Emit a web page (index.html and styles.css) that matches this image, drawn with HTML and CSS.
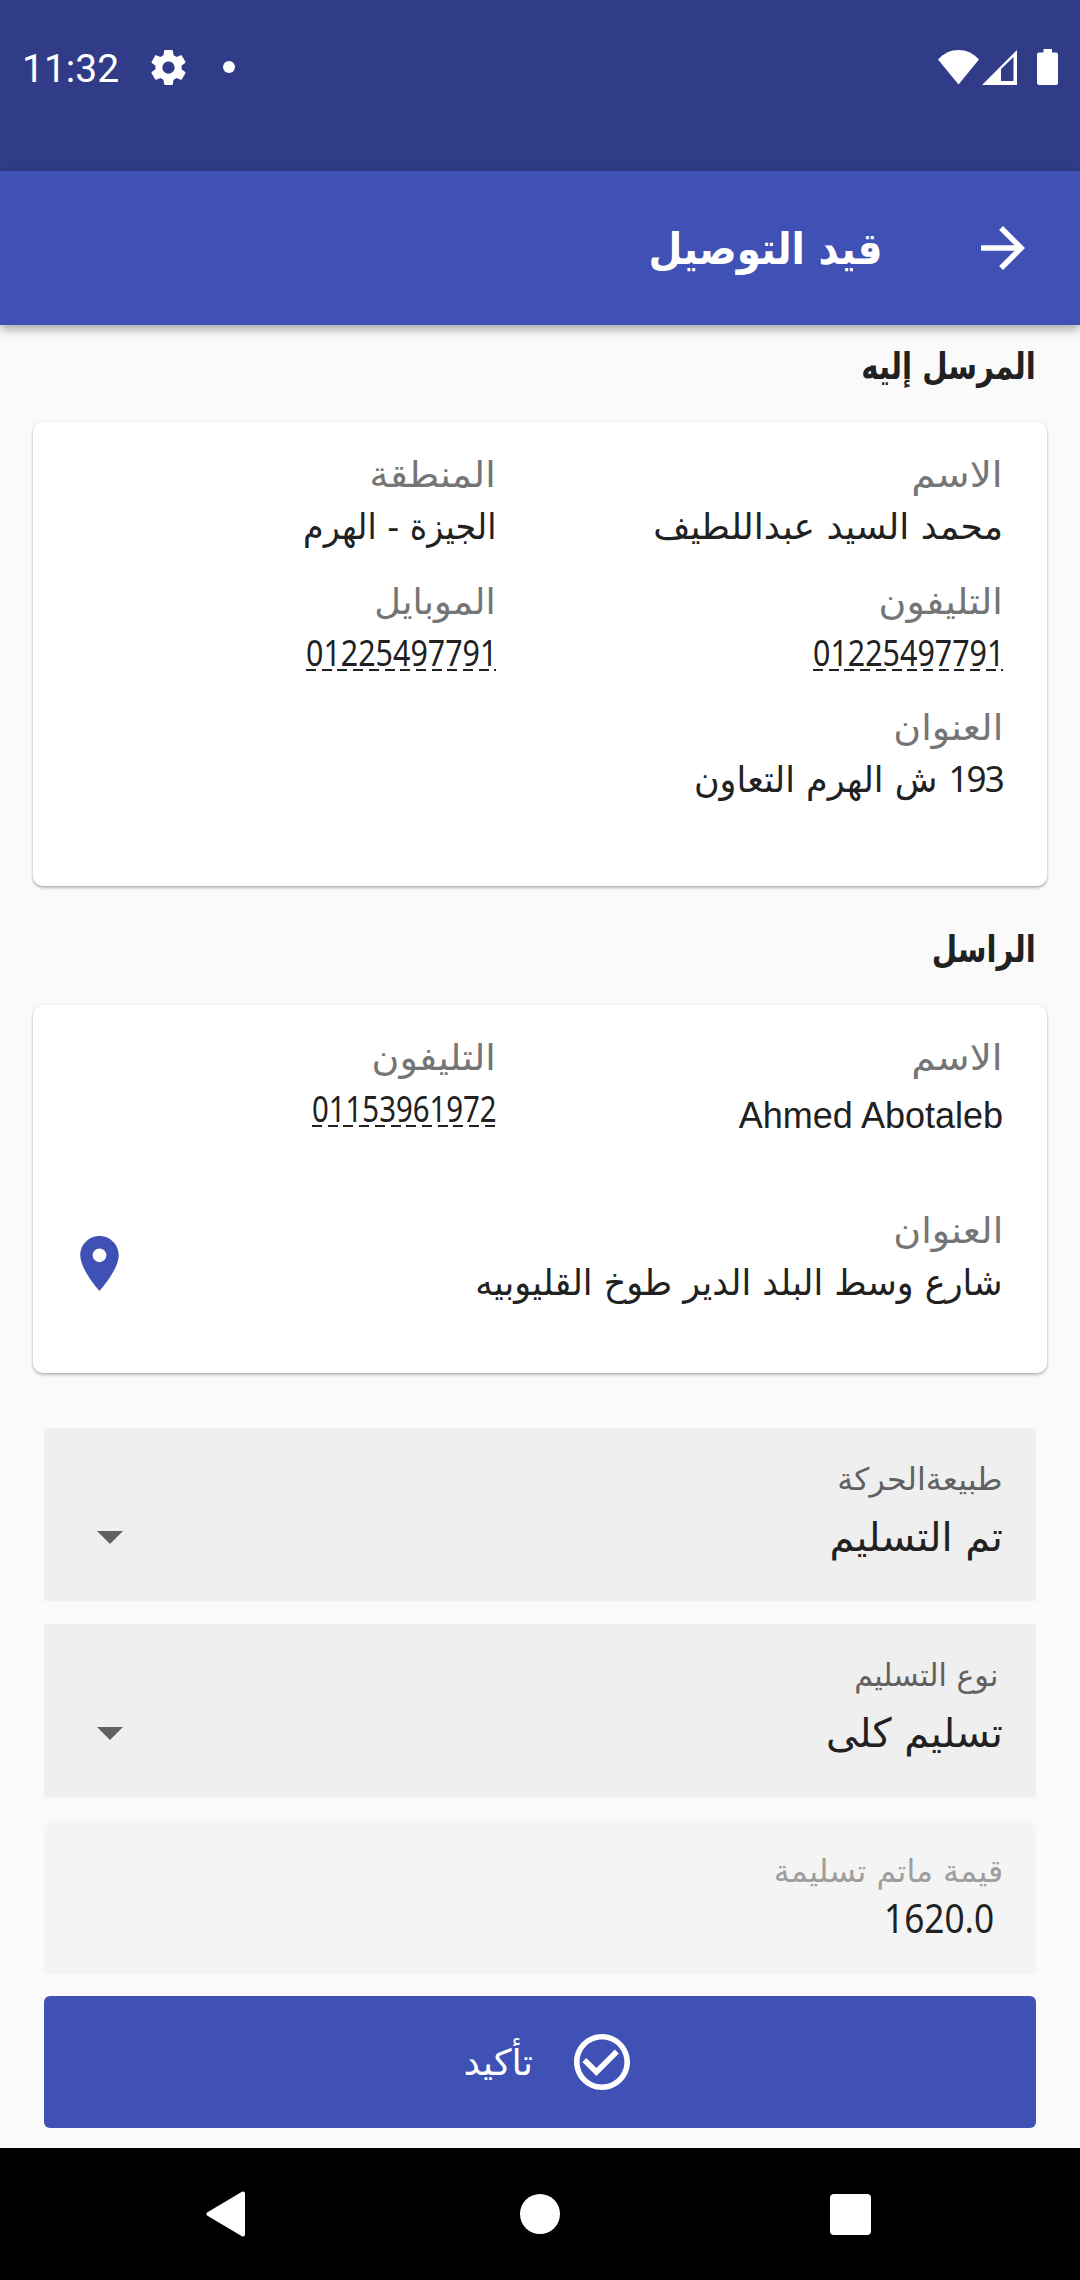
FILE: index.html
```html
<!DOCTYPE html>
<html lang="ar" dir="rtl">
<head>
    <meta charset="UTF-8">
    <meta name="viewport" content="width=device-width, initial-scale=1.0">
    <title>قيد التوصيل</title>
    <link rel="stylesheet" href="styles.css">
</head>
<body>
    <div class="status-bar" dir="ltr">
        <span class="clock">11:32</span>
        <svg class="gear" viewBox="2 2 20 20"><path fill="#fff" d="M19.43 12.98c.04-.32.07-.64.07-.98s-.03-.66-.07-.98l2.11-1.65c.19-.15.24-.42.12-.64l-2-3.46c-.12-.22-.39-.3-.61-.22l-2.49 1c-.52-.4-1.08-.73-1.69-.98l-.38-2.65C14.46 2.18 14.25 2 14 2h-4c-.25 0-.46.18-.49.42l-.38 2.65c-.61.25-1.17.59-1.69.98l-2.49-1c-.23-.09-.49 0-.61.22l-2 3.46c-.13.22-.07.49.12.64l2.11 1.65c-.04.32-.07.65-.07.98s.03.66.07.98l-2.11 1.65c-.19.15-.24.42-.12.64l2 3.46c.12.22.39.3.61.22l2.49-1c.52.4 1.08.73 1.69.98l.38 2.65c.03.24.24.42.49.42h4c.25 0 .46-.18.49-.42l.38-2.65c.61-.25 1.17-.59 1.69-.98l2.49 1c.23.09.49 0 .61-.22l2-3.46c.12-.22.07-.49-.12-.64l-2.11-1.65zM12 15.5c-1.93 0-3.5-1.57-3.5-3.5s1.57-3.5 3.5-3.5 3.5 1.57 3.5 3.5-1.57 3.5-3.5 3.5z"/></svg>
        <span class="dot"></span>
        <div class="status-icons">
            <svg width="41" height="36" viewBox="0 0 41 36"><path fill="#fff" d="M0 10.500C6 4 13 1 20.500 1S35 4 41 10.500L20.500 35.500z"/></svg>
            <svg class="signal" width="35" height="36" viewBox="0 0 35 36"><path fill="#fff" fill-rule="evenodd" d="M0 36L35 1v35zM19 20v12h12.500V8z"/></svg>
            <svg class="battery" width="21" height="36" viewBox="0 0 21 36"><path fill="#fff" d="M6.500 0h8.500v3.500h4a2 2 0 0 1 2 2V34a2 2 0 0 1-2 2H2a2 2 0 0 1-2-2V5.500a2 2 0 0 1 2-2h4.500z"/></svg>
        </div>
    </div>

    <div class="app-bar">
        <svg class="back" viewBox="4 4 16 16"><path fill="#fff" d="M12 4l-1.410 1.410L16.170 11H4v2h12.170l-5.580 5.590L12 20l8-8z"/></svg>
        <h1><span class="fit">قيد التوصيل</span></h1>
    </div>

    <div class="content">
        <h2><span class="fit">المرسل إليه</span></h2>
        <div class="card receiver">
            <div class="item">
                <p class="label"><span class="fit wider">الاسم</span></p>
                <p class="value"><span class="fit">محمد السيد عبداللطيف</span></p>
            </div>
            <div class="item">
                <p class="label"><span class="fit wide-text">المنطقة</span></p>
                <p class="value"><span class="fit narrower">الجيزة - الهرم</span></p>
            </div>
            <div class="item">
                <p class="label"><span class="fit wide-text">التليفون</span></p>
                <p class="phone"><span class="digits">01225497791</span></p>
            </div>
            <div class="item">
                <p class="label"><span class="fit slight">الموبايل</span></p>
                <p class="phone"><span class="digits">01225497791</span></p>
            </div>
            <div class="item wide">
                <p class="label"><span class="fit wide-text">العنوان</span></p>
                <p class="value"><span class="fit narrow"><span class="num">193</span> ش الهرم التعاون</span></p>
            </div>
        </div>

        <h2><span class="fit">الراسل</span></h2>
        <div class="card sender">
            <div class="item">
                <p class="label"><span class="fit wider">الاسم</span></p>
                <p class="latin">Ahmed Abotaleb</p>
            </div>
            <div class="item">
                <p class="label"><span class="fit wide-text">التليفون</span></p>
                <p class="phone short"><span class="digits">01153961972</span></p>
            </div>
            <div class="item wide address">
                <div>
                    <p class="label"><span class="fit wide-text">العنوان</span></p>
                    <p class="value"><span class="fit narrow">شارع وسط البلد الدير طوخ القليوبيه</span></p>
                </div>
                <svg class="pin" viewBox="5 2 14 20"><path fill="#3f51b5" d="M12 2C8.130 2 5 5.130 5 9c0 5.250 7 13 7 13s7-7.750 7-13c0-3.870-3.130-7-7-7zm0 9.500a2.500 2.500 0 0 1 0-5 2.500 2.500 0 0 1 0 5z"/></svg>
            </div>
        </div>

        <div class="form">
            <div class="field">
                <div>
                    <p class="hint"><span class="fit slight">طبيعةالحركة</span></p>
                    <p class="choice"><span class="fit">تم التسليم</span></p>
                </div>
                <span class="caret"></span>
            </div>
            <div class="field">
                <div>
                    <p class="hint indent"><span class="fit narrow">نوع التسليم</span></p>
                    <p class="choice"><span class="fit">تسليم كلى</span></p>
                </div>
                <span class="caret"></span>
            </div>
            <div class="field disabled">
                <div>
                    <p class="hint"><span class="fit slight">قيمة ماتم تسليمة</span></p>
                    <p class="amount"><span class="digits">1620.0</span></p>
                </div>
            </div>
            <button class="confirm">
                <svg viewBox="2 2 20 20"><path fill="#fff" d="M16.590 7.580L10 14.170l-3.590-3.580L5 12l5 5 8-8zM12 2C6.480 2 2 6.480 2 12s4.480 10 10 10 10-4.480 10-10S17.520 2 12 2zm0 18c-4.420 0-8-3.580-8-8s3.580-8 8-8 8 3.580 8 8-3.580 8-8 8z"/></svg>
                <span class="fit slight">تأكيد</span>
            </button>
        </div>
    </div>

    <div class="nav-bar" dir="ltr">
        <svg width="40" height="46" viewBox="0 0 40 46"><path fill="#fff" stroke="#fff" stroke-width="4" stroke-linejoin="round" d="M2.500 23L37 2.500v41z"/></svg>
        <span class="home"></span>
        <span class="recent"></span>
    </div>
</body>
</html>
```

FILE: styles.css
```css
* {
    box-sizing: border-box;
}

body {
    margin: 0;
    width: 1080px;
    height: 2280px;
    display: flex;
    flex-direction: column;
    background-color: #fafafa;
    color: #212121;
    font-family: "DejaVu Sans", sans-serif;
}

h1, h2, p {
    margin: 0;
    white-space: nowrap;
}

svg {
    display: block;
    flex: none;
}

/* Text widths */
.fit, .digits {
    display: inline-block;
    transform-origin: right center;
}

.wider {
    transform: scaleX(1.08);
}

.wide-text {
    transform: scaleX(1.055);
}

.slight {
    transform: scaleX(1.023);
}

.narrow {
    transform: scaleX(0.972);
}

.narrower {
    transform: scaleX(0.923);
}

/* Status bar */
.status-bar {
    height: 171px;
    padding: 44px 22px 0 22px;
    display: flex;
    align-items: flex-start;
    background-color: #303c88;
    color: #fff;
}

.clock {
    width: 129px;
    font-family: Roboto, sans-serif;
    font-size: 39px;
    line-height: 51px;
}

.gear {
    width: 35px;
    height: 35px;
    margin-top: 6px;
}

.dot {
    width: 12px;
    height: 12px;
    margin: 17px 0 0 37px;
    border-radius: 50%;
    background-color: #fff;
}

.status-icons {
    display: flex;
    margin: 5px 0 0 auto;
}

.signal {
    margin-left: 3px;
}

.battery {
    margin-left: 20px;
}

/* App bar */
.app-bar {
    height: 154px;
    padding-right: 55px;
    display: flex;
    align-items: center;
    background-color: #3f51b5;
    color: #fff;
    box-shadow: 0 4px 10px rgba(0, 0, 0, 0.35);
}

.back {
    width: 44px;
    height: 44px;
}

h1 {
    padding-top: 2px;
    margin-right: 99px;
    font-size: 44px;
    line-height: 60px;
}

h1 .fit {
    transform: scaleX(0.885);
}

/* Content */
.content {
    flex: 1;
    padding: 0 33px;
}

h2 {
    padding: 16px 11px 0 0;
    height: 97px;
    font-size: 37px;
    line-height: 52px;
}

h2 .fit {
    transform: scaleX(0.79);
}

.card {
    display: grid;
    grid-template-columns: 507px 507px;
    align-content: start;
    padding: 27px 0 0;
    border-radius: 10px;
    background-color: #fff;
    box-shadow: 0 2px 3px rgba(0, 0, 0, 0.25), 0 0 3px rgba(0, 0, 0, 0.1);
}

.receiver {
    height: 464px;
    margin-bottom: 22px;
    grid-auto-rows: 126.5px;
}

.sender {
    height: 368px;
    grid-auto-rows: 173px;
}

.item {
    padding-right: 44px;
}

.wide {
    grid-column: span 2;
}

.label, .value, .phone, .latin {
    height: 52px;
    font-size: 36px;
    line-height: 52px;
}

.label {
    color: #757575;
}

.num {
    display: inline-block;
    font-family: "Noto Sans", sans-serif;
    line-height: 1;
    letter-spacing: -2px;
}

.phone {
    width: 190px;
    font-family: "Noto Sans", sans-serif;
    font-size: 36px;
    height: 43px;
    line-height: 49px;
    direction: ltr;
    /* long dashes under the number */
    background: repeating-linear-gradient(to right, #212121 0 10px, transparent 10px 15.7px) left bottom / 100% 2px no-repeat;
}

.phone .digits {
    transform: scaleX(0.845);
    transform-origin: left center;
}

.short {
    width: 184px;
}

.short .digits {
    transform: scaleX(0.815);
}

.latin {
    padding-top: 6px;
    font-family: "Liberation Sans", sans-serif;
    direction: ltr;
    text-align: right;
}

.address {
    display: flex;
    justify-content: space-between;
    padding-left: 47px;
}

.pin {
    width: 39px;
    height: 55px;
    margin-top: 31px;
}

/* Form */
.form {
    padding: 55px 11px 0;
}

.field {
    height: 173px;
    margin-bottom: 23px;
    padding: 26px 33px 0 53px;
    display: flex;
    justify-content: space-between;
    background-color: #efefef;
}

.hint {
    height: 50px;
    font-size: 31px;
    line-height: 50px;
    color: #616161;
}

.indent {
    padding-right: 5px;
}

.choice {
    font-size: 40px;
    line-height: 66px;
}

.caret {
    width: 26px;
    height: 13px;
    margin-top: 77px;
    background-color: #616161;
    clip-path: polygon(0 0, 100% 0, 50% 100%);
}

.disabled {
    height: 154px;
    margin-bottom: 22px;
    border-radius: 10px 10px 0 0;
    background-color: #f4f4f4;
}

.disabled .hint {
    color: #9e9e9e;
}

.amount {
    padding-right: 9px;
    font-family: "Noto Sans", sans-serif;
    font-size: 40px;
    line-height: 44px;
}

.amount .digits {
    transform: scaleX(0.88);
}

.confirm {
    width: 992px;
    height: 132px;
    padding: 0;
    display: flex;
    align-items: center;
    border: none;
    border-radius: 6px;
    background-color: #3f51b5;
    color: #fff;
    font-family: "DejaVu Sans", sans-serif;
    font-size: 36px;
}

.confirm svg {
    width: 56px;
    height: 56px;
    margin: 0 406px 0 41px;
}

/* Navigation bar */
.nav-bar {
    height: 132px;
    display: flex;
    align-items: center;
    padding-left: 206px;
    background-color: #000;
}

.home {
    width: 40px;
    height: 40px;
    margin-left: 274px;
    border-radius: 50%;
    background-color: #fff;
}

.recent {
    width: 41px;
    height: 41px;
    margin-left: 270px;
    border-radius: 4px;
    background-color: #fff;
}
```
